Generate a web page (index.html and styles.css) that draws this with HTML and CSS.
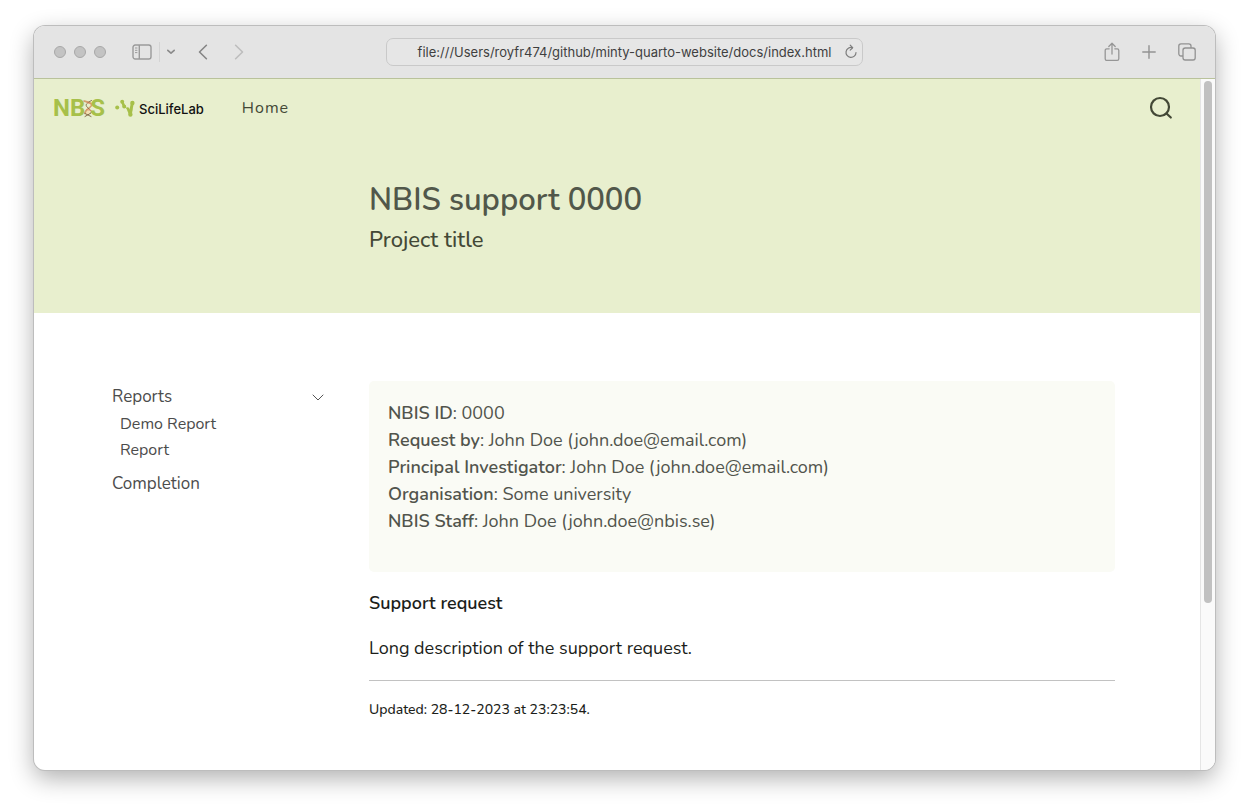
FILE: index.html
```html
<!DOCTYPE html>
<html lang="en">
<head>
<meta charset="utf-8">
<title>NBIS support 0000</title>
<link rel="stylesheet" href="styles.css">
</head>
<body>
<div class="window">
  <header class="toolbar">
    <div class="tools tools-left">
      <div class="lights"><span class="light"></span><span class="light"></span><span class="light"></span></div>
      <button class="tool sidebar-tool" aria-label="Toggle sidebar">
        <svg width="20" height="16" viewBox="0 0 20 16" fill="none" stroke="#9a9a9a" stroke-width="1.4"><rect x="1" y="1" width="18" height="14" rx="2.2"/><path d="M7.3 1v14"/><path d="M3 4h2.4M3 6.3h2.4M3 8.6h2.4" stroke-width="1"/></svg>
      </button>
      <button class="tool menu-tool" aria-label="Tab groups">
        <svg width="10" height="6" viewBox="0 0 10 6" fill="none" stroke="#8b8b8b" stroke-width="1.7" stroke-linecap="round" stroke-linejoin="round"><path d="M1.8 1.4 5 4.2l3.2-2.8"/></svg>
      </button>
      <button class="tool back-tool" aria-label="Back">
        <svg width="10" height="16" viewBox="0 0 10 16" fill="none" stroke="#858585" stroke-width="1.6" stroke-linecap="round" stroke-linejoin="round"><path d="M8.4 1.3 1.5 8l6.9 6.7"/></svg>
      </button>
      <button class="tool forward-tool" aria-label="Forward">
        <svg width="10" height="16" viewBox="0 0 10 16" fill="none" stroke="#bdbdbd" stroke-width="1.6" stroke-linecap="round" stroke-linejoin="round"><path d="M1.6 1.3 8.5 8l-6.9 6.7"/></svg>
      </button>
    </div>
    <div class="address">
      <input class="address-input" type="text" aria-label="Address" value="file:///Users/royfr474/github/minty-quarto-website/docs/index.html">
      <button class="tool" aria-label="Reload">
        <svg width="14" height="16" viewBox="0 0 14 16" fill="none" stroke="#7d7d7d" stroke-width="1.2" stroke-linecap="round" stroke-linejoin="round"><path d="M8.3 3.6A5 5 0 1 0 12 8.5"/><path d="M6.2 1.2 8.7 3.7 6.2 6.1"/></svg>
      </button>
    </div>
    <div class="tools tools-right">
      <button class="tool" aria-label="Share">
        <svg width="16" height="20" viewBox="0 0 16 20" fill="none" stroke="#969696" stroke-width="1.3" stroke-linecap="round" stroke-linejoin="round"><path d="M5.2 6.8H2.8A1.6 1.6 0 0 0 1.2 8.4v8.4a1.6 1.6 0 0 0 1.6 1.6h10.4a1.6 1.6 0 0 0 1.6-1.6V8.4a1.6 1.6 0 0 0-1.6-1.6h-2.4"/><path d="M8 12V1.5M4.8 4.5 8 1.3l3.2 3.2"/></svg>
      </button>
      <button class="tool" aria-label="New tab">
        <svg width="14" height="14" viewBox="0 0 14 14" fill="none" stroke="#929292" stroke-width="1.4" stroke-linecap="round"><path d="M7 .8v12.4M.8 7h12.4"/></svg>
      </button>
      <button class="tool" aria-label="Tab overview">
        <svg width="18" height="18" viewBox="0 0 18 18" fill="none" stroke="#929292" stroke-width="1.3"><rect x="5" y="5" width="12.2" height="12" rx="2.2"/><path d="M5 13H3a2.2 2.2 0 0 1-2.2-2.2V3A2.2 2.2 0 0 1 3 .8h7.8A2.2 2.2 0 0 1 13 3v2"/></svg>
      </button>
    </div>
  </header>
  <div class="viewport">
    <div class="page">
      <div class="banner">
        <nav class="navbar">
          <a class="brand" href="#" aria-label="NBIS SciLifeLab">
            <span class="nbis">NB<svg class="dna" width="12" height="19" viewBox="0 0 12 19" fill="none" stroke-linecap="round"><path d="M3 2.500c4 1 7 2 5.500 4.500S3 10 3 13l1 3.500L9 14c-3-2-1-4 0-6S8 3 5 2z" fill="#f3dfb2"/><path d="M2 2c4 1 8.500 2 7.500 4.500S3 10 2.800 14.500" stroke="#d3a06f" stroke-width="1.600"/><path d="M9.500 1.500C5 4 2.500 5.500 5.500 8.500s4.500 3 3.500 5.500L3 17.500M3 14.500l6 3" stroke="#7a6240" stroke-width=".9"/><path d="M5 3.500l4 1.500M4.500 10.500l4.500 1" stroke="#e38a6b" stroke-width=".8"/></svg>S</span>
            <svg class="mark" width="20" height="19" viewBox="0 0 20 19" fill="none" stroke="#a7c04a" stroke-linecap="round" stroke-linejoin="round"><path d="M2.200 8.600h.01" stroke-width="4"/><path d="M7.200 2.800h.01M9.200 7.400h.01" stroke-width="4"/><path d="M7.200 2.800l2 4.600" stroke-width="2.600"/><path d="M9.200 7.400l3.800 2.800" stroke-width="1"/><path d="M12.800 9.500l2.400 5.800 1-5.300" stroke-width="2.600"/><path d="M15.400 15.500l.6-5 1.400-6.500" stroke-width="3"/><path d="M17.400 4h.01M15.400 15.500h.01" stroke-width="4.400"/></svg>
            <span class="scilifelab">SciLifeLab</span>
          </a>
          <a class="nav-link" href="#">Home</a>
          <button class="tool search" aria-label="Search">
            <svg width="24" height="24" viewBox="0 0 24 24" fill="none" stroke="#434836" stroke-width="2.200" stroke-linecap="round"><circle cx="11" cy="11" r="9"/><path d="M17.500 17.500l4.300 4"/></svg>
          </button>
        </nav>
        <div class="columns heading">
          <div class="heading-text">
            <h1 class="title">NBIS support 0000</h1>
            <p class="subtitle">Project title</p>
          </div>
        </div>
      </div>
      <div class="columns body">
        <nav class="sidebar" aria-label="Reports">
          <div class="section">
            <a href="#">Reports</a>
            <button class="tool" aria-label="Collapse Reports">
              <svg width="12" height="8" viewBox="0 0 12 8" fill="none" stroke="#555" stroke-linecap="round"><path d="M1 1l5 5 5-5"/></svg>
            </button>
          </div>
          <ul class="sub">
            <li><a href="#">Demo Report</a></li>
            <li><a href="#">Report</a></li>
          </ul>
          <a class="entry" href="#">Completion</a>
        </nav>
        <main class="main">
          <div class="info">
            <div><b>NBIS ID</b>: 0000</div>
            <div><b>Request by</b>: John Doe (john.doe@email.com)</div>
            <div><b>Principal Investigator</b>: John Doe (john.doe@email.com)</div>
            <div><b>Organisation</b>: Some university</div>
            <div><b>NBIS Staff</b>: John Doe (john.doe@nbis.se)</div>
          </div>
          <h2 class="request">Support request</h2>
          <p class="description">Long description of the support request.</p>
          <p class="updated">Updated: 28-12-2023 at 23:23:54.</p>
        </main>
      </div>
    </div>
    <div class="scrollbar"><div class="thumb"></div></div>
  </div>
</div>
</body>
</html>
```
FILE: styles.css
```css
* { box-sizing: border-box; }
body {
  margin: 0;
  min-height: 100vh;
  padding: 26px 34px 42px;
  display: flex;
  background: #fff;
  color: #1c1e1a;
  font-family: Nunito, Lato, sans-serif;
  font-size: 18px;
  line-height: 27px;
}
h1, h2, p, ul { margin: 0; padding: 0; }
ul { list-style: none; }
a { color: inherit; text-decoration: none; }
.tool { display: flex; padding: 0; border: 0; background: none; }
.window {
  flex: 1;
  display: flex;
  flex-direction: column;
  overflow: hidden;
  border-radius: 11px;
  background: #fff;
  box-shadow: 0 0 0 1px #bdbdbd, 0 8px 24px rgba(0, 0, 0, .32);
}
.toolbar {
  height: 53px;
  display: grid;
  grid-template-columns: 1fr 477px 1fr;
  align-items: center;
  background: #e4e4e4;
  border-bottom: 1px solid #b9c29b;
}
.tools { display: flex; align-items: center; }
.tools-left { padding-left: 20px; }
.tools-right { justify-content: flex-end; gap: 22px; padding-right: 19px; }
.lights { display: flex; gap: 8px; }
.light { width: 12px; height: 12px; border: 1px solid #a8a8a8; border-radius: 50%; background: #c3c3c3; }
.sidebar-tool { margin-left: 26px; }
.menu-tool { height: 20px; align-items: center; margin-left: 7px; padding-left: 6px; border-left: 1px solid #d4d4d4; }
.back-tool { margin-left: 22px; }
.forward-tool { margin-left: 26px; }
.address {
  height: 28px;
  display: flex;
  align-items: center;
  padding: 0 4px 0 18px;
  border: 1px solid #c9c9c9;
  border-radius: 7px;
  background: #e6e6e6;
}
.address-input {
  flex: 1;
  min-width: 0;
  padding: 0;
  border: 0;
  background: none;
  color: #3f3f3f;
  text-align: center;
  font: 13px/20px Inter, sans-serif;
}
.viewport { flex: 1; display: flex; }
.page { flex: 1; }
.banner { background: #e8efce; color: #434836; padding-bottom: 55px; }
.navbar { display: flex; align-items: center; height: 58px; padding: 0 27px 0 19px; }
.brand { display: flex; align-items: center; }
.nbis { display: flex; align-items: center; color: #a7c04a; font: bold 24px/24px Roboto, sans-serif; }
.dna { margin: 0 -4px 0 -3px; }
.mark { margin-left: 10px; }
.scilifelab { margin-left: 4px; padding-top: 2px; color: #111; font: 500 13px/20px Inter, sans-serif; }
.nav-link { margin-left: 38px; font-size: 16px; letter-spacing: 1px; }
.search { margin-left: auto; }
.columns { padding: 0 85px 0 78px; display: grid; grid-template-columns: 212px 1fr; column-gap: 45px; }
.heading { padding-top: 42px; }
.heading-text { grid-column: 2; }
.title { color: #51574a; font-size: 31px; line-height: 42px; font-weight: 650; }
.subtitle { padding-top: 2px; font-size: 22px; line-height: 35px; font-weight: 500; }
.body { padding-top: 68px; }
.sidebar { padding-top: 3px; color: #4c4c4c; font-size: 17px; line-height: 25px; }
.section { display: flex; align-items: center; justify-content: space-between; }
.section .tool { padding-top: 2px; }
.sub { padding: 2px 0 8px 8px; font-size: 16px; line-height: 26px; }
.entry { display: block; }
.info { padding: 19px 19px 37px; border-radius: 5px; background: #fafbf5; color: #51544c; }
.info b { font-weight: 600; }
.request { margin-top: 18px; font-size: 18px; line-height: 27px; font-weight: 600; }
.description { padding: 18px 0; border-bottom: 1px solid #c2c2c2; }
.updated { margin-top: 18px; font-size: 14px; line-height: 22px; font-weight: 500; }
.scrollbar { width: 15px; padding: 2px 3px; border-left: 1px solid #e5e5e5; background: #fafafa; }
.thumb { height: 76%; border-radius: 4px; background: #c1c1c1; }
```
